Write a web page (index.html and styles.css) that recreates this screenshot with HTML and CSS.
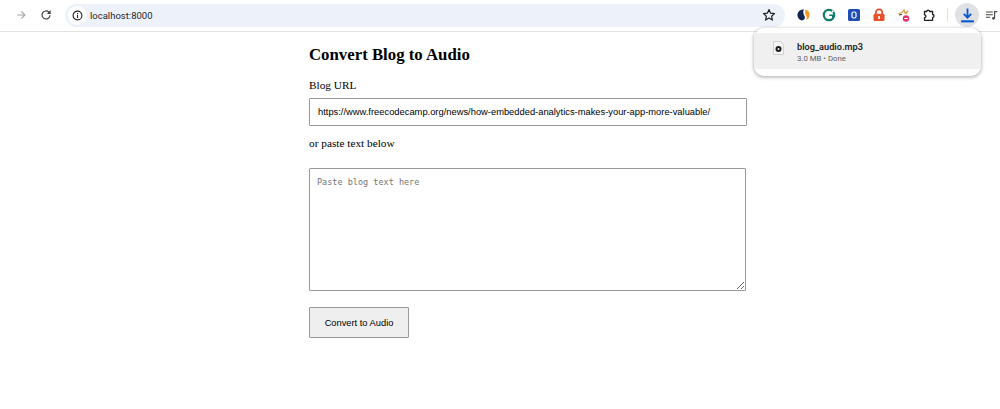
FILE: index.html
```html
<!DOCTYPE html>
<html lang="en">
<head>
<meta charset="utf-8">
<title>Convert Blog to Audio</title>
<link rel="stylesheet" href="styles.css">
</head>
<body>
<header class="toolbar">
  <svg class="nav-icon back" viewBox="0 0 12 12"><path d="M2 6h8M6.300 2.300L10 6l-3.700 3.700" fill="none" stroke="#a3a5a8" stroke-width="1.100"/></svg>
  <svg class="nav-icon reload" viewBox="0 0 12 12"><path d="M10 6.200A4 4 0 1 1 8.800 3.100L10 4.300" fill="none" stroke="#3c4043" stroke-width="1.200"/><path d="M10.600 1v4H6.800z" fill="#3c4043"/></svg>
  <div class="omnibox">
    <span class="site-info"><svg viewBox="0 0 12 12" width="11" height="11"><circle cx="6" cy="6" r="4.800" fill="none" stroke="#1f1f1f" stroke-width="1.200"/><path d="M6 5.200v3.400M6 3.200v1.200" stroke="#1f1f1f" stroke-width="1.200"/></svg></span>
    <span class="url">localhost:8000</span>
    <svg class="star" viewBox="0 0 14 14"><path d="M7 1.600l1.600 3.600 3.900.4-2.900 2.600.8 3.900L7 10.100l-3.400 2 .8-3.900L1.500 5.600l3.900-.4z" fill="none" stroke="#1f1f1f" stroke-width="1.200" stroke-linejoin="round"/></svg>
  </div>
  <div class="extensions">
    <svg class="ext" viewBox="0 0 14 14"><path d="M7 1.500A5.500 5.500 0 0 0 5 12.500c2.500-.5 3.500-2.500 2.500-4.500C6.500 6 5.500 3.500 7 1.500z" fill="#14264f"/><path d="M8.500 1.500a5.500 5.500 0 0 1 .5 10.500c1.500-2 .5-3.800-.2-5C8 5.500 7.800 3.300 8.500 1.500z" fill="#f39a1f"/></svg>
    <svg class="ext" viewBox="0 0 14 14"><circle cx="7" cy="7" r="5.200" fill="none" stroke="#0d7d68" stroke-width="2.200"/><path d="M7.200 7.200h3.600v3" fill="none" stroke="#0d7d68" stroke-width="1.600"/><path d="M10 2l2 2-2 .6z" fill="#fff"/></svg>
    <svg class="ext" viewBox="0 0 14 14"><rect x="1" y="1" width="12" height="12" rx="1.500" fill="#1f4fb5"/><rect x="5" y="4" width="4" height="6" rx="1.500" fill="none" stroke="#fff" stroke-width="1.200"/></svg>
    <svg class="ext" viewBox="0 0 14 14"><path d="M3.800 7V4.500a3.200 3.200 0 0 1 6.400 0V7" fill="none" stroke="#e8502a" stroke-width="1.700"/><rect x="1.500" y="5.800" width="11" height="7.200" rx="1.500" fill="#e8502a"/><rect x="6.200" y="8" width="1.600" height="3" fill="#fff"/></svg>
    <svg class="ext" viewBox="0 0 14 14"><path d="M1 6l4-1.500L7 2l1 3 3-2-2 3" fill="none" stroke="#d9a24a" stroke-width="1.300"/><path d="M2 7l3-.5" stroke="#333" stroke-width="1"/><circle cx="9" cy="10.500" r="3.200" fill="#e5336d"/><rect x="7.300" y="10" width="3.400" height="1" fill="#fff"/></svg>
    <svg class="ext" viewBox="0 0 14 14"><path d="M2.500 3.500h2.300a1.400 1.400 0 0 1 2.800 0h3v3a1.400 1.400 0 0 1 0 2.800v3H2.500V9.600a1.400 1.400 0 0 0 0-2.800z" fill="none" stroke="#1f1f1f" stroke-width="1.300" stroke-linejoin="round"/></svg>
  </div>
  <span class="divider"></span>
  <span class="download-btn"><svg viewBox="0 0 16 16" width="17" height="17"><path d="M8 1.500v8M4.500 6.500L8 10l3.500-3.500" fill="none" stroke="#0b57d0" stroke-width="1.700"/><path d="M2 13.500h12" stroke="#0b57d0" stroke-width="2"/></svg></span>
  <svg class="media" viewBox="0 0 14 12"><path d="M0 2h8M0 5h8M0 8h5" stroke="#444746" stroke-width="1.200"/><path d="M10 9V1.500h3.200" fill="none" stroke="#444746" stroke-width="1.300"/><circle cx="8.800" cy="9.300" r="1.600" fill="#444746"/></svg>
</header>

<aside class="downloads">
  <div class="download-item">
    <svg class="file-icon" viewBox="0 0 11 14"><path d="M.5.500h7l3 3v10H.5z" fill="#f4f4f4" stroke="#d0d0d0"/><circle cx="5.500" cy="8" r="3" fill="#1c1c1c"/><circle cx="5.500" cy="8" r="1" fill="#f4f4f4"/></svg>
    <div class="file-text">
      <div class="file-name">blog_audio.mp3</div>
      <div class="file-meta">3.0 MB • Done</div>
    </div>
  </div>
</aside>

<main class="page">
  <h1 class="title">Convert Blog to Audio</h1>
  <label class="label" for="url">Blog URL</label>
  <input class="url-input" id="url" type="text" value="https://www.freecodecamp.org/news/how-embedded-analytics-makes-your-app-more-valuable/">
  <p class="label or">or paste text below</p>
  <textarea class="text-input" placeholder="Paste blog text here"></textarea>
  <button class="convert" type="button">Convert to Audio</button>
</main>
</body>
</html>
```

FILE: styles.css
```css
* { box-sizing: border-box; }
html, body { margin: 0; padding: 0; }
body {
  width: 1000px;
  height: 409px;
  overflow: hidden;
  background: #fff;
  position: relative;
  font-family: "Liberation Serif", serif;
  color: #000;
}
.toolbar {
  height: 32px;
  display: flex;
  align-items: center;
  border-bottom: 1px solid #e3e3e3;
  padding: 0 0 1px 15px;
  background: #fff;
}
.nav-icon { width: 12px; height: 12px; flex: none; }
.back { margin-right: 13px; }
.reload { margin-right: 13px; }
.omnibox {
  width: 720px;
  height: 23px;
  background: #edf2fa;
  border-radius: 12px;
  display: flex;
  align-items: center;
  padding: 0 5px 0 3px;
  flex: none;
}
.site-info {
  width: 19px;
  height: 19px;
  border-radius: 50%;
  background: #fff;
  display: flex;
  align-items: center;
  justify-content: center;
  margin-right: 3px;
}
.url {
  font: 9.500px "Roboto", "Liberation Sans", sans-serif;
  color: #1f1f1f;
  flex: 1;
}
.star { width: 14px; height: 14px; margin-right: 4px; }
.extensions { display: flex; gap: 11px; margin-left: 12px; }
.ext { width: 14px; height: 14px; flex: none; }
.divider { width: 1px; height: 14px; background: #d3e3fd; margin: 0 7px 0 11px; }
.download-btn {
  width: 24px;
  height: 24px;
  border-radius: 50%;
  background: #dfe1e5;
  display: flex;
  align-items: center;
  justify-content: center;
  flex: none;
}
.media { width: 12px; height: 11px; margin-left: 7px; flex: none; }
.downloads {
  position: absolute;
  left: 754px;
  top: 28px;
  width: 227px;
  height: 48px;
  padding-top: 5px;
  background: #fff;
  border-radius: 10px;
  box-shadow: 0 1px 3px 1px rgba(60, 64, 67, .3);
}
.download-item {
  height: 36px;
  background: #f0f0f0;
  display: flex;
  align-items: center;
  gap: 13px;
  padding-left: 19px;
}
.file-icon { width: 11px; height: 14px; flex: none; margin-bottom: 7px; }
.file-text { padding-top: 1px; }
.file-name { font: 600 9.200px/13px "Roboto", "Liberation Sans", sans-serif; color: #1f1f1f; }
.file-meta { font: 7.800px/11px "Roboto", "Liberation Sans", sans-serif; color: #5f6368; }
.page { width: 747px; padding: 12px 0 0 309px; }
.title { font-size: 16.800px; line-height: 22px; font-weight: bold; margin: 0 0 12px; }
.label { display: block; font-size: 11.300px; line-height: 14px; }
.url-input {
  display: block;
  width: 438px;
  height: 28px;
  margin-top: 6px;
  padding: 0 8px;
  border: 1px solid #999;
  border-radius: 1px;
  font: 9.360px "Liberation Sans", sans-serif;
  color: #000;
  background: #fff;
  outline: none;
}
.or { margin: 10px 0 0; }
.text-input {
  display: block;
  width: 437px;
  height: 123px;
  margin-top: 18px;
  padding: 8px 7px;
  border: 1px solid #999;
  border-radius: 1px;
  font: 8.500px "DejaVu Sans Mono", "Liberation Mono", monospace;
  background: #fff;
  outline: none;
}
.text-input::placeholder { color: #757575; opacity: 1; }
.convert {
  display: block;
  width: 100px;
  height: 31px;
  margin-top: 16px;
  padding: 0;
  border: 1px solid #999;
  border-radius: 1px;
  background: #efefef;
  font: 9.300px "Liberation Sans", sans-serif;
  color: #000;
}
```
